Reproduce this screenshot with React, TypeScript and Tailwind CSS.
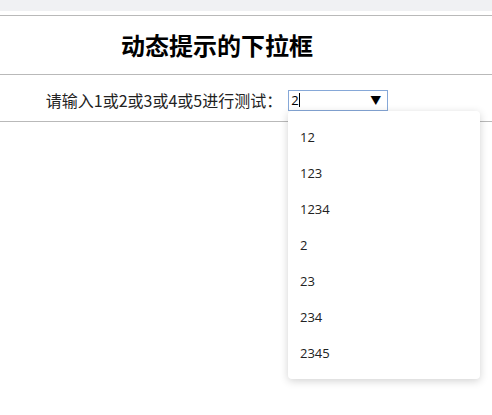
import React from "react";

const items = ["12", "123", "1234", "2", "23", "234", "2345"];

export default function App() {
  return (
    <div
      className="relative w-[492px] h-[415px] bg-white overflow-hidden"
      style={{ fontFamily: '"Segoe UI", "Open Sans", "Noto Sans CJK SC", sans-serif' }}
    >
      <div className="h-[11px] bg-[#f0f1f3]" />
      <div className="h-[4px] bg-white" />
      <div className="h-px bg-[#b9b9b9]" />
      <div className="h-[58px] flex items-center w-[434px] justify-center">
        <h1
          className="text-[24px] font-bold text-black leading-none"
          style={{ fontFamily: '"Noto Sans CJK SC", sans-serif' }}
        >
          动态提示的下拉框
        </h1>
      </div>
      <div className="h-px bg-[#b9b9b9]" />
      <div className="h-[46px] w-[434px] flex items-center justify-center pt-[4px]">
        <span
          className="text-[16px] text-[#222] leading-none"
          style={{ fontFamily: '"Noto Sans CJK SC", sans-serif' }}
        >
          请输入1或2或3或4或5进行测试：
        </span>
        <div className="ml-[6px] w-[100px] h-[21px] border border-[#86a8d8] flex items-center justify-between px-[2px] text-[13px] text-black">
          <span className="flex items-center leading-none">
            2<span className="inline-block w-px h-[14px] bg-black" />
          </span>
          <span className="text-[11px] leading-none mr-[4px]">▼</span>
        </div>
      </div>
      <div className="h-px bg-[#b9b9b9]" />

      <div className="absolute left-[288px] top-[111px] w-[192px] h-[268px] bg-white rounded-[4px] shadow-[0_2px_8px_rgba(0,0,0,0.18)] pt-[9px] pb-[5px]">
        {items.map((it) => (
          <div
            key={it}
            className="h-[36px] flex items-center pl-[12px] text-[13px] text-[#222]"
            style={{ fontFamily: '"Open Sans", "Noto Sans", sans-serif' }}
          >
            {it}
          </div>
        ))}
      </div>
    </div>
  );
}
